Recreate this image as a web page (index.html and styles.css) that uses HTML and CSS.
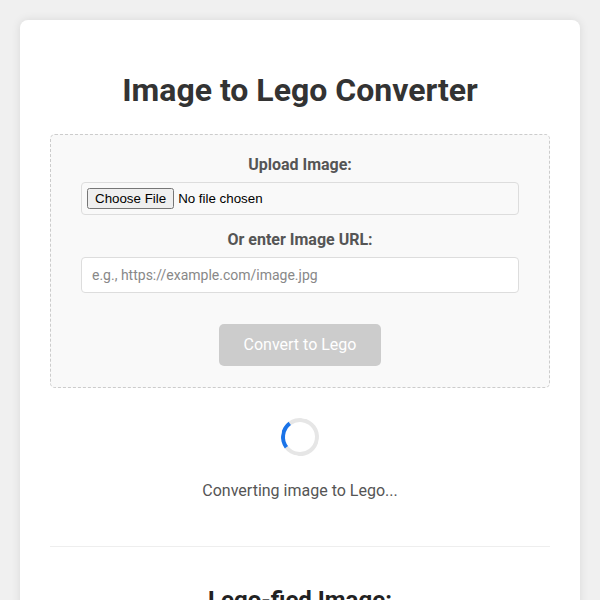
FILE: index.html
```html
<!DOCTYPE html>
<html lang="en">
<head>
<meta charset="utf-8">
<title>Image to Lego Converter</title>
<link rel="stylesheet" href="styles.css">
</head>
<body>
<div class="container">
  <h1 class="title">Image to Lego Converter</h1>
  <div class="upload-box">
    <label class="field-label" for="file">Upload Image:</label>
    <input class="file-input" id="file" type="file">
    <label class="field-label second" for="url">Or enter Image URL:</label>
    <input class="url-input" id="url" type="text" placeholder="e.g., https://example.com/image.jpg">
    <button class="convert-btn" disabled>Convert to Lego</button>
  </div>
  <div class="loading">
    <div class="spinner"></div>
    <p class="loading-text">Converting image to Lego...</p>
  </div>
  <hr class="divider">
  <h2 class="result-title">Lego-fied Image:</h2>
</div>
</body>
</html>
```
FILE: styles.css
```css
* { box-sizing: border-box; }
body {
  margin: 0;
  padding: 20px;
  background: #f0f0f0;
  font-family: Roboto, "Liberation Sans", Arial, sans-serif;
  color: #333;
}
.container {
  max-width: 560px;
  margin: 0 auto;
  background: #fff;
  border-radius: 8px;
  padding: 30px;
  box-shadow: 0 0 10px rgba(0,0,0,0.1);
  text-align: center;
}
.title {
  font-size: 32px;
  font-weight: 700;
  color: #333;
  margin: 21px 0 25px;
}
.upload-box {
  border: 1px dashed #ccc;
  border-radius: 5px;
  background: #f9f9f9;
  padding: 20px 30px 21px;
  display: flex;
  flex-direction: column;
  align-items: stretch;
}
.field-label {
  display: block;
  font-weight: 700;
  font-size: 16px;
  color: #555;
  margin-bottom: 8px;
}
.field-label.second { margin-top: 15px; }
.file-input {
  display: block;
  width: 100%;
  height: 33px;
  border: 1px solid #ddd;
  border-radius: 4px;
  padding: 5px;
  font-family: "Liberation Sans", Arial, sans-serif;
  font-size: 13.33px;
  line-height: 21px;
  background: #f9f9f9;
  color: #000;
}
.file-input::file-selector-button {
  height: 21px;
  padding: 0 6px;
  margin-right: 4px;
  font-family: "Liberation Sans", Arial, sans-serif;
  font-size: 13.33px;
}
.url-input {
  display: block;
  width: 100%;
  border: 1px solid #ddd;
  border-radius: 4px;
  padding: 8px 10px;
  line-height: 18px;
  font-family: Roboto, "Liberation Sans", Arial, sans-serif;
  font-size: 14px;
  background: #fff;
}
.url-input::placeholder { color: #888; }
.convert-btn {
  align-self: center;
  margin-top: 31px;
  background: #ccc;
  color: #fff;
  border: none;
  border-radius: 5px;
  padding: 12px 25px;
  font-family: Roboto, "Liberation Sans", Arial, sans-serif;
  font-size: 16px;
  line-height: 18px;
}
.loading {
  margin-top: 30px;
  display: flex;
  flex-direction: column;
  align-items: center;
}
.spinner {
  width: 38px;
  height: 38px;
  border: 4px solid #e6e6e6;
  border-left-color: #1a73e8;
  border-radius: 50%;
  transform: rotate(8deg);
}
.loading-text {
  margin: 25px 0 0;
  font-size: 16px;
  color: #555;
}
.divider {
  border: none;
  border-top: 1px solid #eee;
  margin: 46px 0 0;
}
.result-title {
  font-size: 24px;
  font-weight: 700;
  color: #222;
  margin: 39px 0 0;
}
```
